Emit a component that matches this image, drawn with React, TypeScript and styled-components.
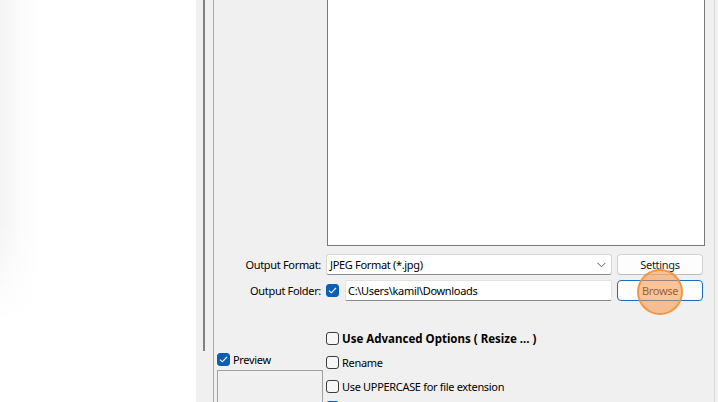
import React from "react";
import styled, { createGlobalStyle } from "styled-components";

const GlobalStyle = createGlobalStyle`
  html, body { margin: 0; padding: 0; background: #f0f0f0; }
  body { font-family: "Noto Sans", sans-serif; font-size: 11px; letter-spacing: -0.32px; color: #000; }
  * { box-sizing: border-box; }
`;

const Window = styled.div`
  display: flex;
  width: 718px;
  height: 402px;
  overflow: hidden;
  background: #f0f0f0;
`;

const SidePane = styled.div`
  width: 196px;
  flex: none;
  background:
    linear-gradient(to bottom, rgba(255,255,255,0) 0%, rgba(255,255,255,0) 55%, #ffffff 80%),
    linear-gradient(to right, #f4f4f4 0px, #fafafa 18px, #ffffff 40px);
`;

const Splitter = styled.div`
  width: 17px;
  flex: none;
  padding-left: 7px;
`;

const SplitBar = styled.div`
  width: 2px;
  height: 351px;
  background: #808080;
`;

const MainPanel = styled.div`
  flex: 1;
  display: flex;
  border-left: 1px solid #a8a8a8;
`;

const Content = styled.div`
  width: 501px;
  flex: none;
  display: flex;
  flex-direction: column;
  border-right: 1px solid #d9d9d9;
`;

const ListBox = styled.div`
  margin-left: 113px;
  width: 378px;
  height: 246px;
  flex: none;
  background: #ffffff;
  border: 1px solid #7a7a7a;
  border-top: none;
`;

const FieldRow = styled.div<{ $top: number }>`
  display: grid;
  grid-template-columns: 112px 1fr;
  align-items: center;
  height: 21px;
  margin-top: ${(p) => p.$top}px;
`;

const Label = styled.div`
  text-align: right;
  padding-right: 5px;
  white-space: nowrap;
`;

const Controls = styled.div`
  display: flex;
  align-items: center;
  height: 21px;
`;

const Combo = styled.div`
  width: 286px;
  height: 21px;
  display: flex;
  align-items: center;
  justify-content: space-between;
  padding: 0 5px 0 3px;
  background: #ffffff;
  border: 1px solid #d6d6d6;
  border-bottom-color: #8a8a8a;
  border-radius: 3px;
  white-space: nowrap;
`;

const TextField = styled.div`
  width: 267px;
  height: 21px;
  margin-left: 6px;
  display: flex;
  align-items: center;
  padding-left: 2px;
  background: #ffffff;
  border: 1px solid #e2e2e2;
  border-bottom-color: #8a8a8a;
  border-radius: 2px;
  white-space: nowrap;
`;

const ButtonWrap = styled.div`
  position: relative;
  margin-left: 5px;
`;

const Button = styled.div<{ $focused?: boolean }>`
  width: 86px;
  height: 21px;
  display: flex;
  align-items: center;
  justify-content: center;
  background: #fdfdfd;
  border: 1px solid ${(p) => (p.$focused ? "#1a6fc4" : "#d2d2d2")};
  border-bottom-color: ${(p) => (p.$focused ? "#1a6fc4" : "#bcbcbc")};
  border-radius: 4px;
  color: #1b1b1b;
`;

const ClickMarker = styled.div`
  position: absolute;
  left: 50%;
  top: 50%;
  width: 46px;
  height: 46px;
  margin-left: -23px;
  margin-top: -22px;
  border-radius: 50%;
  background: rgba(248, 150, 70, 0.55);
  border: 2px solid rgba(245, 145, 60, 0.9);
  pointer-events: none;
`;

const Box = styled.span<{ $checked?: boolean }>`
  width: 13px;
  height: 13px;
  flex: none;
  display: inline-flex;
  align-items: center;
  justify-content: center;
  border-radius: 3px;
  background: ${(p) => (p.$checked ? "#0a5fb4" : "#f7f7f7")};
  border: 1px solid ${(p) => (p.$checked ? "#0a5fb4" : "#3c3c3c")};
`;

const BottomGrid = styled.div`
  display: grid;
  grid-template-columns: 112px 1fr;
  margin-top: 25px;
`;

const LeftCol = styled.div`
  display: flex;
  flex-direction: column;
  padding-left: 3px;
  padding-top: 26px;
`;

const CheckLine = styled.label<{ $bold?: boolean }>`
  display: flex;
  align-items: center;
  gap: 3px;
  white-space: nowrap;
  ${(p) =>
    p.$bold
      ? `font-size: 11.5px; font-weight: 700; letter-spacing: 0;`
      : ``}
`;

const PreviewBox = styled.div`
  margin-top: 3px;
  width: 106px;
  height: 60px;
  border: 1px solid #a0a0a0;
  background: #f0f0f0;
`;

const OptionList = styled.div`
  display: flex;
  flex-direction: column;
`;

const OptionRow = styled.div<{ $h: number }>`
  height: ${(p) => p.$h}px;
  display: flex;
  align-items: flex-start;
  padding-top: 5px;
`;

const Check = ({ checked }: { checked?: boolean }) => (
  <Box $checked={checked}>
    {checked && (
      <svg width="9" height="7" viewBox="0 0 9 7">
        <path d="M1 3.6 L3.3 5.8 L8 1" fill="none" stroke="#fff" strokeWidth="1.1" />
      </svg>
    )}
  </Box>
);

const Chevron = () => (
  <svg width="9" height="6" viewBox="0 0 9 6">
    <path d="M0.5 0.8 L4.5 4.8 L8.5 0.8" fill="none" stroke="#5c5c5c" strokeWidth="1" />
  </svg>
);

export default function App() {
  return (
    <>
      <GlobalStyle />
      <Window>
        <SidePane />
        <Splitter>
          <SplitBar />
        </Splitter>
        <MainPanel>
          <Content>
            <ListBox />
            <FieldRow $top={8}>
              <Label>Output Format:</Label>
              <Controls>
                <Combo>
                  <span>JPEG Format (*.jpg)</span>
                  <Chevron />
                </Combo>
                <ButtonWrap>
                  <Button>Settings</Button>
                </ButtonWrap>
              </Controls>
            </FieldRow>
            <FieldRow $top={5}>
              <Label>Output Folder:</Label>
              <Controls>
                <Check checked />
                <TextField>C:\Users\kamil\Downloads</TextField>
                <ButtonWrap>
                  <Button $focused>Browse</Button>
                  <ClickMarker />
                </ButtonWrap>
              </Controls>
            </FieldRow>
            <BottomGrid>
              <LeftCol>
                <CheckLine>
                  <Check checked />
                  Preview
                </CheckLine>
                <PreviewBox />
              </LeftCol>
              <OptionList>
                <OptionRow $h={24}>
                  <CheckLine $bold>
                    <Check />
                    Use Advanced Options ( Resize ... )
                  </CheckLine>
                </OptionRow>
                <OptionRow $h={24}>
                  <CheckLine>
                    <Check />
                    Rename
                  </CheckLine>
                </OptionRow>
                <OptionRow $h={21}>
                  <CheckLine>
                    <Check />
                    Use UPPERCASE for file extension
                  </CheckLine>
                </OptionRow>
                <OptionRow $h={24}>
                  <CheckLine>
                    <Check checked />
                    Keep original date/time attributes
                  </CheckLine>
                </OptionRow>
              </OptionList>
            </BottomGrid>
          </Content>
        </MainPanel>
      </Window>
    </>
  );
}
